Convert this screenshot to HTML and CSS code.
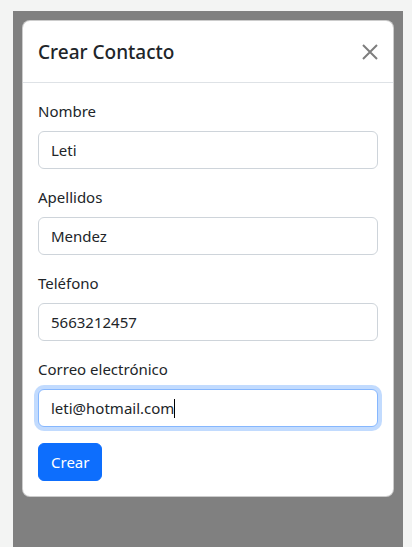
FILE: index.html
```html
<!DOCTYPE html>
<html lang="es">
<head>
<meta charset="utf-8">
<title>Crear Contacto</title>
<link rel="stylesheet" href="styles.css">
</head>
<body>
<div class="backdrop">
  <div class="modal">
    <div class="modal-header">
      <h5 class="modal-title">Crear Contacto</h5>
      <button class="btn-close" type="button" aria-label="Close">
        <svg viewBox="0 0 16 16" width="16" height="16"><path d="M1 1 L15 15 M15 1 L1 15" stroke="#000" stroke-width="2" fill="none"/></svg>
      </button>
    </div>
    <div class="modal-body">
      <div class="field">
        <label class="form-label">Nombre</label>
        <input class="form-control" type="text" value="Leti">
      </div>
      <div class="field">
        <label class="form-label">Apellidos</label>
        <input class="form-control" type="text" value="Mendez">
      </div>
      <div class="field">
        <label class="form-label">Teléfono</label>
        <input class="form-control" type="text" value="5663212457">
      </div>
      <div class="field">
        <label class="form-label">Correo electrónico</label>
        <div class="form-control focused">leti@hotmail.com<span class="caret"></span></div>
      </div>
      <button class="btn-primary" type="button">Crear</button>
    </div>
  </div>
</div>
</body>
</html>
```
FILE: styles.css
```css
* { box-sizing: border-box; }
html, body { margin: 0; padding: 0; }
body {
  background: #f3f4f3;
  font-family: "Noto Sans", "Open Sans", sans-serif;
  color: #212529;
  font-size: 16px;
  line-height: 24px;
}
.backdrop {
  margin: 11px 9px 0 13px;
  padding: 9px;
  background: #808080;
  min-height: calc(100vh - 11px);
}
.modal {
  background: #fff;
  border-radius: 8px;
  border: 1px solid rgba(0,0,0,.2);
}
.modal-header {
  display: flex;
  align-items: center;
  justify-content: space-between;
  padding: 16px 15px 15px 15px;
  border-bottom: 1px solid #dee2e6;
}
.modal-title {
  margin: 0;
  font-size: 19px;
  font-weight: 500;
  line-height: 30px;
}
.btn-close {
  border: 0;
  background: transparent;
  padding: 0;
  width: 16px;
  height: 16px;
  opacity: .5;
  display: flex;
}
.modal-body {
  padding: 16px 15px 15px 15px;
}
.field { margin-bottom: 16px; }
.form-label {
  display: block;
  margin-bottom: 8px;
  font-size: 15px;
}
.form-control {
  display: block;
  width: 100%;
  height: 38px;
  padding: 6px 12px;
  font-family: inherit;
  font-size: 15px;
  line-height: 24px;
  color: #212529;
  background: #fff;
  border: 1px solid #ced4da;
  border-radius: 6px;
  outline: none;
}
.focused {
  border-color: #86b7fe;
  box-shadow: 0 0 0 4px rgba(13,110,253,.25);
}
.caret {
  display: inline-block;
  width: 1px;
  height: 19px;
  background: #000;
  vertical-align: -4px;
}
.btn-primary {
  display: block;
  height: 38px;
  padding: 6px 12px;
  font-family: inherit;
  font-size: 15px;
  line-height: 24px;
  color: #fff;
  background: #0d6efd;
  border: 1px solid #0d6efd;
  border-radius: 6px;
}
```
